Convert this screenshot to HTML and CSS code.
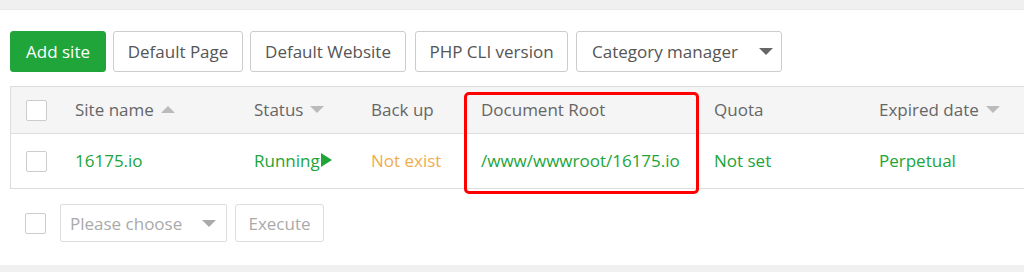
FILE: index.html
```html
<!DOCTYPE html>
<html>
<head>
<meta charset="utf-8">
<link rel="stylesheet" href="styles.css">
</head>
<body>
<div class="panel">
  <div class="toolbar">
    <button class="btn btn-green">Add site</button>
    <button class="btn">Default Page</button>
    <button class="btn">Default Website</button>
    <button class="btn">PHP CLI version</button>
    <button class="btn btn-select">Category manager<span class="caret dark"></span></button>
  </div>
  <div class="table-wrap">
    <div class="table">
      <div class="row head">
        <div class="cell"><span class="check"></span></div>
        <div class="cell">Site name<span class="sort up"></span></div>
        <div class="cell">Status<span class="sort down"></span></div>
        <div class="cell">Back up</div>
        <div class="cell mark-cell">Document Root<span class="highlight"></span></div>
        <div class="cell">Quota</div>
        <div class="cell">Expired date<span class="sort down"></span></div>
      </div>
      <div class="row body">
        <div class="cell"><span class="check"></span></div>
        <div class="cell green">16175.io</div>
        <div class="cell green">Running<span class="play"></span></div>
        <div class="cell orange">Not exist</div>
        <div class="cell green">/www/wwwroot/16175.io</div>
        <div class="cell green">Not set</div>
        <div class="cell green">Perpetual</div>
      </div>
    </div>
  </div>
  <div class="batch">
    <span class="check"></span>
    <div class="choose">Please choose<span class="caret light"></span></div>
    <button class="btn btn-exec">Execute</button>
  </div>
</div>
</body>
</html>
```

FILE: styles.css
```css
* { box-sizing: border-box; }
html, body {
  margin: 0;
  padding: 0;
  background: #f0f0f0;
  font-family: "Open Sans", "Liberation Sans", sans-serif;
  font-size: 17px;
  color: #555;
}
html { overflow: hidden; }
body { padding-top: 9px; }
.panel {
  background: #fff;
  height: 256px;
  padding: 21px 0 0 10px;
  border-top: 1px solid #eaeaea;
}
.toolbar {
  display: flex;
  height: 41px;
}
.btn {
  font-family: inherit;
  font-size: 17px;
  color: #555;
  background: #fff;
  border: 1px solid #ccc;
  border-radius: 3px;
  height: 41px;
  padding: 0 14px;
  margin-right: 7px;
  display: flex;
  align-items: center;
  justify-content: center;
  white-space: nowrap;
}
.btn-green {
  background: #20a53a;
  border-color: #20a53a;
  color: #fff;
  width: 96px;
}
.toolbar .btn:nth-child(2) { width: 130px; }
.toolbar .btn:nth-child(3) { width: 156px; margin-right: 9px; }
.toolbar .btn:nth-child(4) { width: 153px; margin-right: 8px; }
.btn-select { padding: 0 8px 0 15px; width: 206px; justify-content: space-between; }
.caret {
  width: 0; height: 0;
  border-left: 7px solid transparent;
  border-right: 7px solid transparent;
  border-top: 7px solid #666;
}
.caret.light { border-top-color: #aaa; }
.table-wrap {
  margin-top: 14px;
}
.table {
  width: 1014px;
  border: 1px solid #ddd;
  border-right: 0;
}
.row {
  display: grid;
  grid-template-columns: 48px 179px 117px 110px 233px 165px 1fr;
}
.head { background: #f5f5f5; height: 47px; border-bottom: 1px solid #ddd; color: #666; }
.body { height: 54px; }
.cell {
  display: flex;
  align-items: center;
  padding-left: 16px;
  padding-bottom: 2px;
  white-space: nowrap;
}
.row .cell:first-child { padding-left: 15px; padding-bottom: 0; }
.check {
  display: inline-block;
  width: 21px;
  height: 21px;
  border: 1px solid #ccc;
  border-radius: 2px;
  background: #fff;
}
.sort {
  width: 0; height: 0;
  margin-left: 7px;
  border-left: 7px solid transparent;
  border-right: 7px solid transparent;
}
.sort.up { border-bottom: 7px solid #bbb; }
.sort.down { border-top: 7px solid #bbb; }
.green { color: #20a53a; }
.orange { color: #f0ad4e; }
.play {
  width: 0; height: 0;
  margin-left: 1px;
  border-top: 7px solid transparent;
  border-bottom: 7px solid transparent;
  border-left: 11px solid #20a53a;
}
.mark-cell { position: relative; }
.highlight {
  position: absolute;
  left: -1px;
  top: 5px;
  width: 235px;
  height: 102px;
  border: 3px solid #f00;
  border-radius: 5px;
  pointer-events: none;
}
.batch {
  display: flex;
  align-items: center;
  margin-top: 15px;
  padding-left: 15px;
}
.batch .check { margin-right: 14px; }
.choose {
  width: 167px;
  height: 38px;
  border: 1px solid #ddd;
  border-radius: 2px;
  color: #aaa;
  display: flex;
  align-items: center;
  justify-content: space-between;
  padding: 0 10px 0 9px;
  margin-right: 8px;
}
.btn-exec {
  height: 38px;
  border-color: #ddd;
  color: #aaa;
  padding: 0 14px;
  width: 89px;
}
```
